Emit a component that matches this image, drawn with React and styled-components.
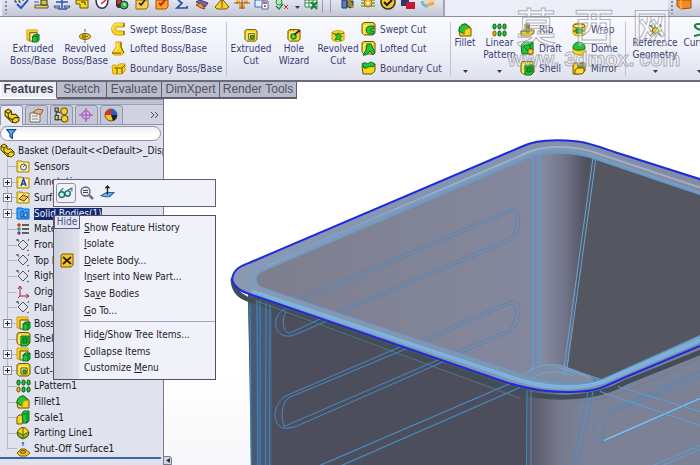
import React from "react";
import styled, { createGlobalStyle, css } from "styled-components";

const ui = `"DejaVu Sans Condensed", "DejaVu Sans", sans-serif`;

const GlobalStyle = createGlobalStyle`
  * { box-sizing: border-box; }
  body { margin: 0; background: #fff; font-family: ${ui}; font-size: 10px; overflow: hidden; }
  button { font: inherit; color: inherit; border: 0; padding: 0; background: none; }
  ul { list-style: none; margin: 0; padding: 0; }
`;

const Page = styled.div`
  height: 100vh;
  display: flex;
  flex-direction: column;
  overflow: hidden;
`;

/* ---------- top tool strip ---------- */

const TopStrip = styled.header`
  flex: none;
  height: 17px;
  display: flex;
  background: #eceef7;
  border-bottom: 1px solid #8c8e9c;
`;

const ToolGroup = styled.div`
  flex: none;
  display: flex;
  align-items: flex-start;
  width: ${(p) => p.$width}px;
  margin-left: ${(p) => (p.$push ? "auto" : "2px")};
  background: linear-gradient(#e3e5f0, #c3c6d5);
  border-right: ${(p) => (p.$push ? 0 : "2px")} solid #a3a5b5;
`;

const Grip = styled.span`
  flex: none;
  width: 4px;
  height: 14px;
  margin: 0 ${(p) => p.$gap}px 0 2px;
  background: radial-gradient(circle, #8789a0 1px, transparent 1px) 0 0 / 4px 4px;
`;

const ToolSeparator = styled.span`
  flex: none;
  width: 4px;
  height: 13px;
  margin-right: 4px;
  border-left: 1px solid #9a9cae;
`;

const ToolButton = styled.button`
  flex: none;
  width: 20px;
  height: 12px;
  display: flex;
  justify-content: center;
  ${(p) => p.$narrow && css`width: 10px; align-items: center; padding-top: 2px;`}
`;

/* ---------- ribbon ---------- */

const Ribbon = styled.nav`
  position: relative;
  flex: none;
  height: 65px;
  display: flex;
  background: linear-gradient(#fafbff, #f1f2f9 50%, #dfe1ec);
  border-bottom: 2px solid #696b7a;
  color: #373e70;
  overflow: hidden;
`;

const RibbonGroup = styled.div`
  flex: none;
  display: flex;
  margin: 5px 0 4px;
  padding: 0 2px 0 ${(p) => p.$pad || 0}px;
  border-right: 1px solid #c0c2d2;
`;

const LargeButton = styled.button`
  flex: none;
  width: ${(p) => p.$width}px;
  display: flex;
  flex-direction: column;
  align-items: center;
  padding-top: ${(p) => (p.$menu ? 1 : 7)}px;
  line-height: 12px;
  text-align: center;
  white-space: nowrap;

  span { margin-top: ${(p) => (p.$menu ? -1 : 0)}px; height: 24px; }
  svg:last-child { margin-top: ${(p) => (p.$menu ? 9 : 0)}px; }
  > svg:first-child { margin: 0; flex: none; }
`;

const SmallColumn = styled.div`
  flex: none;
  width: ${(p) => p.$width}px;
  display: flex;
  flex-direction: column;
  margin: -2px 0;
`;

const SmallButton = styled.button`
  height: 20px;
  display: flex;
  align-items: center;
  gap: 4px;
  white-space: nowrap;
`;

const Watermark = styled.div`
  position: absolute;
  z-index: 3;
  top: 0;
  right: 20px;
  width: 172px;
  display: flex;
  flex-direction: column;
  align-items: center;
  pointer-events: none;
  color: rgba(255, 255, 255, 0.35);
  -webkit-text-stroke: 1px rgba(135, 137, 150, 0.65);
`;

const WatermarkTitle = styled.div`
  display: flex;
  gap: 18px;
  font: 500 40px/50px "Noto Sans CJK SC", sans-serif;
`;

const WatermarkSite = styled.div`
  display: flex;
  gap: 5px;
  font: bold 20px/24px "Liberation Sans", sans-serif;
  margin-top: -3px;
`;

/* ---------- command tabs ---------- */

const Tabs = styled.div`
  flex: none;
  height: 17px;
  display: flex;
  padding-left: 1px;
`;

const Tab = styled.button`
  flex: none;
  width: ${(p) => p.$width}px;
  font: 12px/15px "Liberation Sans", sans-serif;
  color: #50525f;
  background: #b9bccb;
  border: solid #5c5e6c;
  border-width: 0 1px 2px 0;
  ${(p) => p.$active && css`
    font-weight: bold;
    color: #3f4150;
    background: #eceef5;
    border-bottom-color: #fbfbfd;
  `}
`;

/* ---------- workspace ---------- */

const Workspace = styled.main`
  position: relative;
  flex: 1;
  min-height: 0;
  display: flex;
`;

const Sidebar = styled.aside`
  flex: none;
  width: 164px;
  display: flex;
  flex-direction: column;
  background: #e0e3ed;
  border-right: 1px solid #777990;
  color: #15151c;
`;

const ManagerTabs = styled.div`
  flex: none;
  height: 26px;
  display: flex;
  align-items: flex-end;
  gap: 2px;
  padding-right: 4px;
  background: linear-gradient(#8f92a5 0 1px, #bfc3d3 1px 5px, #9c9fb2 5px 6px, #ced2e2 6px 25px, #8f92a8 25px);
`;

const ManagerTab = styled.button`
  width: 23px;
  height: 20px;
  display: grid;
  place-items: center;
  border: 1px solid #9497aa;
  border-bottom: 0;
  border-radius: 3px 3px 0 0;
  background: ${(p) => (p.$active ? "#e8ebf4" : "#c3c7d8")};
  ${(p) => !p.$active && css`border-bottom: 1px solid #9497aa;`}
`;

const MoreButton = styled.button`
  margin-left: auto;
  height: 20px;
  display: grid;
  place-items: center;
`;

const FilterBox = styled.label`
  flex: none;
  height: 15px;
  margin: 1px 2px 2px 0;
  display: flex;
  align-items: center;
  padding-left: 5px;
  border: 1px solid #8d90a4;
  border-radius: 8px;
  background: linear-gradient(#eceef5, #fff 60%);

  input { flex: 1; min-width: 0; height: 11px; border: 0; outline: 0; background: none; font: inherit; }
`;

const Tree = styled.ul`
  flex: 1;
  min-height: 0;
  display: grid;
  grid-auto-rows: 1fr;
  overflow: hidden;
`;

const TreeRow = styled.li`
  position: relative;
  min-height: 0;
  display: flex;
  align-items: center;
  gap: 3px;
  padding-left: ${(p) => (p.$root ? 0 : 16)}px;
  white-space: nowrap;

  svg { position: relative; flex: none; }
  ${(p) => !p.$root && css`
    &::before {
      content: "";
      position: absolute;
      left: 7px;
      top: 0;
      width: 9px;
      height: ${p.$last ? "50%" : "100%"};
      border-left: 1px solid #b5b7c5;
      background: linear-gradient(#b5b7c5, #b5b7c5) 0 ${p.$last ? "100%" : "50%"} / 9px 1px no-repeat;
    }
  `}
`;

const TreeLabel = styled.span`
  line-height: 12px;
  ${(p) => p.$selected && css`background: #14286e; color: #e8ecff;`}
`;

const Expander = styled.button`
  position: absolute;
  left: 3px;
  width: 9px;
  height: 9px;
  border: 1px solid #85889a;
  background:
    linear-gradient(#222, #222) 50% 50% / 5px 1px no-repeat,
    linear-gradient(#222, #222) 50% 50% / 1px 5px no-repeat,
    #f6f7fb;
`;

const RollbackBar = styled.div`
  flex: none;
  height: 8px;
  margin-right: 2px;
  border-top: 2px solid #3c62a8;
  background: #dfe2ec;
`;

const SplitterHandle = styled.button`
  position: absolute;
  left: 163px;
  bottom: 0;
  width: 9px;
  height: 9px;
  display: grid;
  place-items: center;
  background: #d4d7e4;
  border: 1px solid #777990;
  border-radius: 0 3px 0 0;
`;

const Viewport = styled.section`
  flex: 1;
  min-width: 0;
  overflow: hidden;

  svg { display: block; width: 100%; height: 100%; }
`;

/* ---------- floating context menu ---------- */

const ContextArea = styled.div`
  position: absolute;
  z-index: 2;
  left: 53px;
  top: 80px;
  width: 163px;
  color: #20212c;
`;

const ContextToolbar = styled.div`
  height: 28px;
  display: flex;
  align-items: center;
  gap: 1px;
  padding-left: 2px;
  background: #f1f2f9;
  border: 1px solid #5f6275;
`;

const ContextTool = styled.button`
  width: 20px;
  height: 20px;
  display: grid;
  place-items: center;
  border: 1px solid ${(p) => (p.$active ? "#9a8f93" : "transparent")};
  border-radius: 3px;
`;

const Menu = styled.div`
  position: relative;
  height: 165px;
  margin-top: 8px;
  padding: 3px 0;
  display: grid;
  grid-template-rows: repeat(6, 1fr) 8px repeat(3, 1fr);
  background: linear-gradient(to right, #cdd1de, #dfe2ec 25px, #f1f2f9 26px);
  border: 1px solid #4f5163;
`;

const MenuItem = styled.button`
  min-height: 0;
  display: grid;
  grid-template-columns: 27px 1fr;
  gap: 3px;
  align-items: center;
  justify-items: start;
  text-align: left;
  white-space: nowrap;

  svg { justify-self: center; }
`;

const MenuRule = styled.hr`
  width: 135px;
  margin: 3px 0 3px 26px;
  padding: 0;
  border: 0;
  border-top: 1px solid #9fa2b3;
`;

const Tooltip = styled.div`
  position: absolute;
  left: 0;
  top: -1px;
  width: 26px;
  height: 14px;
  background: #e3e6f2;
  border: 1px solid #5a5d78;
  color: #4d5278;
  line-height: 12px;
  text-align: center;
`;

/* ---------- icons ---------- */

const Y = "#f7d51d";
const YD = "#d99b10";
const O = "#6c5308";
const G = "#22c43a";
const GD = "#0b6e1e";

const cube = (
  <>
    <path d="M1 2l2-1.500h9l2 1.500v9l-2 2H3l-2-2z" fill={Y} stroke={O} />
    <path d="M3 3.500h9M3 3.500v9" stroke="#fff3a0" fill="none" />
  </>
);

const art = {
  extrude: (<><path d="M1 1h11v3H5v8H1z" fill={Y} stroke={YD} /><path d="M4 4h8v9H4z" fill="#f2e7a8" stroke={O} /><path d="M7 8l2-2h5v6l-2 2H7z" fill={G} stroke={GD} /><path d="M7 8h5v6M12 8l2-2" fill="none" stroke={GD} /></>),
  revolve: (<><ellipse cx="7.500" cy="8" rx="6" ry="3.200" fill={Y} stroke={O} /><path d="M4 8h7" stroke={O} /><path d="M7.500 0v15" stroke="#555" strokeDasharray="3 1" /><path d="M5 6v4l3-2z" fill={YD} stroke={O} strokeWidth=".7" /></>),
  sweep: (<><path d="M13 1H6C-1 1-1 13 6 13h7V9H7C4 9 4 5 7 5h6z" fill={Y} stroke={YD} /><path d="M12 2H6C2 2 1 5 2 8" fill="none" stroke="#fff19a" /><path d="M13 1v4M13 9v4" stroke={O} /></>),
  loft: (<><path d="M5 1h5v5l3 6-3 2H3l-2-2 4-6z" fill={Y} stroke={YD} /><path d="M6 2v5l-3 5" stroke="#fff19a" fill="none" /><path d="M10 1v5l3 6M1 12h9" stroke={O} fill="none" /></>),
  boundary: (<><path d="M1 5c3-3 4 1 6-1s4-1 7-1v7l-3 3H2z" fill={Y} stroke={YD} /><path d="M3 7h8v6M11 7l3-3M6 7v6" fill="none" stroke={O} /></>),
  cut: (<>{cube}<path d="M5 5h6v6H5z" fill="#f5f1a0" stroke={O} /><path d="M7 7h3v3H7z" fill={G} stroke={GD} /></>),
  hole: (<>{cube}<circle cx="7" cy="8" r="3" fill={G} stroke={GD} /><circle cx="7" cy="8" r="1" fill={Y} /><path d="M8 6l6-5" stroke="#222" strokeWidth="2" /><path d="M3 1l1 1M7 0v2M10 0v1M1 4h1" stroke="#d33" /></>),
  revcut: (<><path d="M1 4c0-3 13-3 13 0v7c0 3-13 3-13 0z" fill={Y} stroke={YD} /><path d="M1 4c2 2 11 2 13 0" fill="none" stroke={O} /><path d="M4 12l2-4-2-2h3l1-2 2 3 2 1-2 2 1 3-3-2z" fill={G} stroke={GD} strokeWidth=".7" /></>),
  sweepcut: (<>{cube}<path d="M13 4H9c-5 0-5 8 0 8h4V9h-3V7h3z" fill={G} stroke={GD} /></>),
  loftcut: (<>{cube}<path d="M6 3h4l4 9-2 2-3-4-4 4H2l3-5z" fill={G} stroke={GD} /></>),
  boundcut: (<><path d="M1 5c3-3 4 1 6-1s4-1 7-1v7l-3 3H2z" fill={Y} stroke={O} /><path d="M1 3c3-3 5 1 7-1s4 0 6 1l-2 3c-3-2-6 2-9 1z" fill={G} stroke={GD} /></>),
  fillet: (<><path d="M1 8c0-5 3-7 7-7l5 4v8H2z" fill={Y} stroke={O} /><path d="M1 8c0-5 3-7 7-7l4 4c-4 0-6 2-6 6z" fill={G} stroke={GD} /><path d="M6 13V9c0-3 3-4 7-4" fill="none" stroke={YD} /></>),
  pattern: (<>{[0, 5, 10].map((x) => [0, 7].map((y) => (<rect key={`${x}${y}`} x={x + 1} y={y + 1} width="3" height="5" rx="1.500" fill={x === 0 && y === 7 ? "#f5a21d" : G} stroke={x === 0 && y === 7 ? O : "#0a4d17"} />)))}</>),
  rib: (<><path d="M1 9h4V2h4v5l5 1v3l-4 3H1z" fill={Y} stroke={O} /><path d="M6 2h3v8H6zM3 8h9" fill={G} stroke="#a34b16" /></>),
  draft: (<><path d="M1 4l3-3h9v8l-2 4H2z" fill={G} stroke={GD} /><path d="M1 4h9l3-3M10 4l1 9M3 5l6 6" fill="none" stroke={GD} /><path d="M8 8h5v5H8z" fill={Y} stroke={O} /></>),
  shell: (<>{cube}<path d="M5 4h8v8l-2 2H5z" fill={G} stroke={GD} /><path d="M7 6h4v5H7z" fill="#0fa52b" stroke={GD} /></>),
  wrap: (<><path d="M1 4c0-4 12-4 12 0v7c0 4-12 4-12 0z" fill={Y} stroke={YD} /><ellipse cx="7" cy="4" rx="6" ry="2" fill="#fbec7b" stroke={O} /><path d="M4 7h6v4H4zM7 7v4M1 9h3M10 9h3" fill={G} stroke={GD} /></>),
  dome: (<><path d="M1 7h12v4c-2 4-10 4-12 0z" fill={Y} stroke={YD} /><path d="M1 7c0-8 12-8 12 0-2 3-10 3-12 0z" fill={G} stroke={GD} /></>),
  mirror: (<><path d="M1 2h5v5h3V2h4v8H7v3H1z" fill={Y} stroke={O} /><path d="M7 3l4-2v7l-4 2z" fill={G} stroke="#9a4318" /><path d="M3 9l3-2h6v4l-2 2H3z" fill="#ffdc34" stroke={O} /></>),
  refgeo: (<><path d="M1 2l12 11M13 1L2 13M7 0v14M1 8h13" stroke="#857b25" /><circle cx="7.500" cy="7.500" r="3" fill={Y} stroke={O} /><path d="M2 3l2-1v3M11 2h2v2M11 12l2-1" stroke="#3b7f32" fill="none" /></>),
  curves: (<path d="M13 2C1-1 1 4 6 6c6 2 7 5-4 7" fill="none" stroke="#16813a" strokeWidth="2" />),
  part: (<><path d="M1 3l3-2 3 2v3l4 0 3 3v3l-3 2-4-1-3-3-3-3z" fill={Y} stroke="#4c3a03" /><path d="M1 3l3 2 3-2M4 5v4l4 2 2-2 4 0M8 11v3" fill="none" stroke="#4c3a03" /></>),
  folder: (<><path d="M1 2h5l1 1h6v10H1z" fill="#f7dc4c" stroke="#a8861c" /><path d="M3 4h9v8H3z" fill="#fdf1a5" /></>),
  plane: (<path d="M7 2l5 5-5 5-5-5zM0 2h3M1 1l2 3M11 13l2-1M12 3l1-2" fill="none" stroke="#50525f" />),
};

art.sensor = <>{art.folder}<circle cx="7.500" cy="8" r="3" fill="#dff0ff" stroke="#356" /><path d="M7 8l2-2" stroke="#c22" /></>;
art.anno = <>{art.folder}<path d="M5 11l2.500-7L10 11M6 9h3" fill="none" stroke="#1c3fc2" strokeWidth="1.500" /></>;
art.surf = <>{art.folder}<path d="M3 9l4-4 5 2-4 4z" fill="#ffb82c" stroke="#5a3c05" /></>;
art.solid = <><path d="M1 2h5l1 1h6v10H1z" fill="#38a7f5" stroke="#0e5ec6" /><path d="M5 6l2-1v6H5zM8 8l3-2v5H8z" fill="#9be3ff" stroke="#063fa9" /></>;
art.mates = <><path d="M6 3h7M6 7h7M6 11h7" stroke="#333" strokeWidth="1.500" /><circle cx="3" cy="3" r="1.700" fill="#d32d2d" /><circle cx="3" cy="7" r="1.700" fill="#28a03a" /><circle cx="3" cy="11" r="1.700" fill="#6d34bb" /></>;
art.origin = <path d="M4 2v9h8M2 4l2-3 2 3M10 9l3 2-3 2M4 11l-2 2" fill="none" stroke="#a8233b" />;
art.scale = <><path d="M1 7l2-2h4v7l-1 2H1z" fill={Y} stroke={O} /><path d="M6 3l2-2h5v10l-2 2H7z" fill={G} stroke={GD} /><path d="M7 4h4v9M11 4l2-2" fill="none" stroke={GD} /></>;
art.parting = <><circle cx="7" cy="7" r="5.500" fill={Y} stroke={O} /><path d="M1 6l6 3 6-3-1 4-5 3-5-3zM7 1v12" fill={G} fillOpacity=".6" stroke={O} /></>;
art.shutoff = <><path d="M1 11l4-4h4l5 4-4 3H4z" fill={Y} stroke={O} /><ellipse cx="7" cy="10" rx="3" ry="1.500" fill="#f39d16" stroke={O} /><path d="M6 2l1-2 1 2M7 1v3" stroke="#2b60cd" fill="none" /></>;
art.property = <><path d="M1 5h10v9H1z" fill="#f3efe2" stroke="#7b6a54" /><path d="M3 8h6M3 11h6" stroke="#789" /><path d="M4 4l5-3 5 1-2 4H8z" fill="#e5b184" stroke="#8d5a31" /></>;
art.config = <><path d="M2 2v10h5M2 5h5" stroke="#333" fill="none" /><circle cx="9.500" cy="4" r="3" fill={Y} stroke={O} /><circle cx="10" cy="11" r="3" fill={Y} stroke={O} /><path d="M1 1h3v3H1zM1 8h3v4H1z" fill="#d7d272" stroke="#333" /></>;
art.target = <><circle cx="7" cy="7" r="4" fill="none" stroke="#b863c2" strokeWidth="1.500" /><path d="M7 0v14M0 7h14" stroke="#b863c2" strokeWidth="1.500" /></>;
art.display = <><circle cx="7" cy="7" r="6" fill="#f4c51c" stroke="#555" /><path d="M7 7V1a6 6 0 016 6z" fill="#2860c8" /><path d="M7 7H1a6 6 0 016-6z" fill="#dc2d20" /><path d="M7 7h6a6 6 0 01-4 6z" fill="#222" /></>;
art.funnel = <path d="M1 2h11L8 7v6l-3-2V7z" fill="#55b5ec" stroke="#174ba0" strokeWidth="1.500" />;
art.glasses = <><circle cx="3.500" cy="9" r="2.700" fill="#c6f0ee" stroke="#246a70" strokeWidth="1.300" /><circle cx="9" cy="8" r="2.500" fill="#c6f0ee" stroke="#246a70" strokeWidth="1.300" /><path d="M2 6l3-3M9 5l4-2v3" fill="none" stroke="#246a70" /></>;
art.magnify = <><circle cx="5.500" cy="5.500" r="4.500" fill="#e4edf5" stroke="#5d6474" strokeWidth="1.300" /><path d="M3 4.500h5M3 6.500h5" stroke="#444" /><path d="M9 9l4 4" stroke="#6a7486" strokeWidth="2.500" /></>;
art.normal = <><path d="M1 10l5-3h7l-4 4H5z" fill="#70b3ea" stroke="#2563a5" /><path d="M7 9V1M5 3l2-2 2 2" fill="none" stroke="#222" strokeWidth="1.300" /></>;
art.deleteBody = <><path d="M1 2l2-1h10v11l-2 2H1z" fill="#fac526" stroke="#825703" /><path d="M3 4l8 7M11 4l-8 7" stroke="#2a2108" strokeWidth="1.700" /></>;

function Icon({ name, size = 14 }) {
  return (
    <svg width={size} height={size} viewBox="0 0 15 15" aria-hidden="true">{art[name]}</svg>
  );
}

const Caret = () => (
  <svg width="5" height="3" viewBox="0 0 5 3" aria-hidden="true"><path d="M0 0h5L2.500 3z" fill="#33364f" /></svg>
);

/* Lower parts of the standard tool icons, clipped by the window top. */
const stripArt = {
  "Spell check": <><path d="M4 4l4 4 7-8" stroke="#2c58cf" strokeWidth="2" fill="none" /><path d="M2 0v2h2M6 0v2h2M10 0v1" stroke="#223" fill="none" /></>,
  Measure: <><path d="M2 5h13v3H2z" fill="#e6d44a" stroke="#555" /><path d="M8 0h6v5H8z" fill="#d9c233" stroke="#333" /><path d="M1 2h5" stroke="#2c58cf" /></>,
  "Mass properties": <><path d="M9 0v8M3 2h12M5 9h9" stroke="#2854b9" strokeWidth="1.500" /><path d="M1 6h6l-1 2H2zM11 6h6l-1 2h-4z" fill="#f3ca2d" stroke="#2854b9" /></>,
  "Section properties": <><path d="M3 0h12v8H7V4H3z" fill={Y} stroke={O} /><path d="M8 2h4v3" stroke="#333" fill="none" /></>,
  "Sensor": <><path d="M3 0c0 11 12 11 12 0" fill="#fff" stroke="#33334d" strokeWidth="1.500" /><path d="M8 4l5-4" stroke="#d22" strokeWidth="1.500" /></>,
  Statistics: <><path d="M3 0h6v8H5L3 6z" fill="#32353d" /><circle cx="6" cy="2" r="2" fill="#e03520" /><circle cx="11" cy="5" r="4" fill="#38b63f" stroke="#234" /><path d="M11 3v2h2" stroke="#fff" fill="none" /></>,
  "Check": <><path d="M3 0h12v7l-2 2H3z" fill="#fad04a" stroke="#8b6710" /><path d="M6 3l2 2 4-5" stroke="#223" strokeWidth="1.700" fill="none" /></>,
  "Import diagnostics": <><path d="M3 0h12v7l-2 2H3z" fill="#f5a823" stroke="#a94d10" /><path d="M6 3l2 2 4-5" stroke="#c81f12" strokeWidth="2" fill="none" /></>,
  Equations: <path d="M5 0l4 3-5 5h10V6" stroke="#234da7" strokeWidth="1.700" fill="none" />,
  "Deviation": <><path d="M3 2l4-2 8 3-3 4-3-2z" fill="#7a64b7" stroke="#373b72" /><path d="M3 5l5-2 4 6-4-1z" fill="#f19b38" stroke="#814c15" /></>,
  "Draft analysis": <><path d="M2 7L8 0h2l6 7-3 2H4z" fill="#f8cf23" stroke="#7a5a0e" /><path d="M9 0v8" stroke="#7a5a0e" /></>,
  "Undercut": <><path d="M3 2h4M11 2h4M6 6h6" stroke="#e4ab1c" strokeWidth="3" /><path d="M1 3h16M6 8h6" stroke="#8d5a12" /><path d="M9 0v9" stroke="#bd2d1a" /></>,
  "Help": <><path d="M2 0h9v7H2z" fill="#e2efff" stroke="#3f6caf" /><path d="M9 1h6v8H9z" fill="#fff" stroke="#3f6caf" /><path d="M10 3h4M12 5v2" stroke="#c22" strokeWidth="1.500" /></>,
  "Compare": <><circle cx="6" cy="2" r="3" fill="#aee8b3" stroke="#268a38" /><path d="M3 6l3 3 4-5" stroke="#268a38" strokeWidth="1.500" fill="none" /><path d="M11 5l4 4M15 5l-4 4" stroke="#d33" /></>,
  "Design table": <><path d="M2 0h12v7H2zM2 3h12M6 0v7M10 0v7" fill="#fff" stroke="#338547" /><path d="M8 2l6 7M14 2L8 9" stroke="#188536" strokeWidth="2" /></>,
  "Simulation": <><path d="M3 0h5v8H3z" fill="#5f7bd0" stroke="#234" /><path d="M8 1h6v5l-3 2-3-2z" fill="#3bac4b" stroke="#234" /><path d="M9 0l5 8" stroke="#db761c" strokeWidth="2" /></>,
  "Motion": <><path d="M2 0h14M2 3h14M2 6h14" stroke="#80b468" strokeWidth="2" /><circle cx="9" cy="3" r="4" fill="#f6bd2e" stroke="#a26a17" /><circle cx="9" cy="3" r="1.500" fill="#fff" /></>,
  "Verify": <><circle cx="9" cy="2" r="7" fill="#f5c728" stroke="#33301d" strokeWidth="1.500" /><path d="M5 2l3 3 5-5" stroke="#191919" strokeWidth="2" fill="none" /></>,
  "Body compare": <><path d="M2 0h8v6H2z" fill="#2d396d" /><path d="M7 2h9v7H7z" fill="#c51936" /></>,
  "Render": <><circle cx="10" cy="2" r="6.500" fill="#f1d7a5" /><path d="M3 1a5 5 0 006 5" stroke="#68bfdd" strokeWidth="3" fill="none" /><path d="M9 5l6-2" stroke="#eea35d" strokeWidth="3" /></>,
  "Assembly": <><path d="M2 0h14v8l-10 1-4-3z" fill="#f18b22" stroke="#a14d0c" /><path d="M6 0v9" stroke="#ffc46b" /></>,
};

function StripTool({ name }) {
  return (
    <ToolButton aria-label={name}>
      <svg width="18" height="11" viewBox="0 0 18 11" aria-hidden="true">{stripArt[name]}</svg>
    </ToolButton>
  );
}

const firstTools = ["Spell check", "Measure", "Mass properties", "Section properties", "Sensor", "Statistics", "Check", "Import diagnostics", "Equations", "Deviation", "Draft analysis", "Undercut", "Help", "Compare"];
const lastTools = ["Simulation", "Motion", "Verify", "Body compare", "Render"];

/* ---------- ribbon parts ---------- */

function Large({ icon, lines, width, menu }) {
  return (
    <LargeButton $width={width} $menu={menu}>
      <Icon name={icon} size={menu ? 15 : 14} />
      <span>{lines[0]}<br />{lines[1]}</span>
      {menu && <Caret />}
    </LargeButton>
  );
}

function Small({ items, width }) {
  return (
    <SmallColumn $width={width}>
      {items.map(([icon, label]) => (
        <SmallButton key={label}><Icon name={icon} size={15} />{label}</SmallButton>
      ))}
    </SmallColumn>
  );
}

const tabs = [["Features", 56], ["Sketch", 50], ["Evaluate", 55], ["DimXpert", 58], ["Render Tools", 77]];

const tree = [
  ["sensor", "Sensors"], ["anno", "Annotations", true], ["surf", "Surface Bodies", true],
  ["solid", "Solid Bodies(1)", true, true], ["mates", "Material"], ["plane", "Front Plane"],
  ["plane", "Top Plane"], ["plane", "Right Plane"], ["origin", "Origin"], ["plane", "Plane1"],
  ["extrude", "Boss-Extrude1", true], ["shell", "Shell1"], ["extrude", "Boss-Extrude2", true],
  ["cut", "Cut-Extrude1", true], ["pattern", "LPattern1"], ["fillet", "Fillet1"],
  ["scale", "Scale1"], ["parting", "Parting Line1"], ["shutoff", "Shut-Off Surface1"],
];

const menuTop = [["", "S", "how Feature History"], ["", "I", "solate"], ["", "D", "elete Body...", "deleteBody"], ["I", "n", "sert into New Part..."], ["Sa", "v", "e Bodies"], ["", "G", "o To..."]];
const menuBottom = [["Hid", "e", "/Show Tree Items..."], ["", "C", "ollapse Items"], ["Customize ", "M", "enu"]];

function Item({ parts: [before, key, after, icon] }) {
  return (
    <MenuItem role="menuitem">
      {icon ? <Icon name={icon} size={15} /> : <i />}
      <span>{before}<u>{key}</u>{after}</span>
    </MenuItem>
  );
}

/* ---------- basket model ---------- */

const outerRim = "M250 262L522 146C534 140 552 138 578 141C592 143 604 148 616 152L720 185V337L627 376C606 385 600 390 580 391C552 393 532 389 510 383L248 293C236 289 230 281 233 275C235 268 242 265 250 262Z";
const innerRim = "M262 271L523 160C541 151 569 151 590 157L720 201V326L604 378C590 384 556 385 532 377L262 287C255 284 254 275 262 271Z";

function Basket() {
  return (
    <svg viewBox="164 98 536 367" preserveAspectRatio="xMidYMid slice" role="img" aria-label="Basket model">
      <defs>
        <linearGradient id="sky" x1="0" y1="0" x2="0" y2="1"><stop offset=".45" stopColor="#fff" /><stop offset="1" stopColor="#e2e4ea" /></linearGradient>
        <linearGradient id="wall" x1="0" y1="0" x2="1" y2="0"><stop offset="0" stopColor="#7c7e8d" /><stop offset="1" stopColor="#85889d" /></linearGradient>
        <linearGradient id="backCorner" gradientUnits="userSpaceOnUse" x1="540" y1="0" x2="588" y2="0"><stop offset="0" stopColor="#8a8ca1" /><stop offset=".5" stopColor="#73758a" /><stop offset="1" stopColor="#4e505e" /></linearGradient>
        <linearGradient id="frontCorner" gradientUnits="userSpaceOnUse" x1="527" y1="0" x2="582" y2="0"><stop offset="0" stopColor="#535562" /><stop offset=".6" stopColor="#777a8d" /><stop offset="1" stopColor="#7d8196" /></linearGradient>
        <linearGradient id="rim" x1="0" y1="0" x2="1" y2="0"><stop offset="0" stopColor="#8b98b2" /><stop offset=".55" stopColor="#8294b0" /><stop offset="1" stopColor="#808ba1" /></linearGradient>
        <clipPath id="inside"><path d={innerRim} /></clipPath>
      </defs>
      <rect x="0" y="98" width="900" height="600" fill="url(#sky)" />

      <path d="M248 292L535 382V700H255Z" fill="#4d4e5b" />
      <path d="M527 380H600L720 330V700H527Z" fill="url(#frontCorner)" />
      <path d="M248 297L252 465V700H272V306Z" fill="#475a72" />
      <path d="M233 278C233 288 237 294 246 298L510 389C550 401 596 399 625 382L720 344" fill="none" stroke="#414d57" strokeWidth="5" />

      <g fill="none" stroke="#438bc7">
        <path d="M250 304L253 700M257 300L259 700M260 300V700M266 302L265 700M270 304L269 700" />
        <path d="M255 300L520 398M570 402C596 402 618 393 640 385L700 358" stroke="#5c7e9c" strokeWidth=".7" />
        <path d="M286 308C274 313 273 327 280 333Q285 337 293 335L326 321M286 311C281 319 283 331 289 333L321 318" />
        <path d="M401 346L289 394C272 400 270 427 286 428L296 426L446 360M407 348L289 397C281 402 281 418 284 426L439 359" />
        <path d="M515 381L315 467M520 387L337 467" strokeWidth="1.300" />
        <path d="M527 390L525 700M531 390V700M588 391L572 465L552 560M593 391L578 465L558 560" />
        <path d="M700 371L618 406C603 411 594 420 594 430C594 442 598 444 606 441L700 399M700 376L617 410C606 415 602 429 604 440L700 397" />
        <path d="M700 398L604 440" stroke="#8bb9dc" strokeWidth="1.500" />
        <path d="M600 391L700 425M618 386L700 411M660 466L700 449M651 466L700 445" stroke="#5aa0d3" />
      </g>

      <path d={outerRim} fill="url(#rim)" />
      <path d="M266 265L523 154C540 145 568 144 592 151L700 187" fill="none" stroke="#b0b5ca" strokeWidth="2" opacity=".75" />
      <path d="M256 285C246 278 250 271 262 266L520 158C542 146 570 147 592 155L700 192" fill="none" stroke="#719fca" strokeWidth="2" />
      <path d="M252 291L520 380C554 390 588 389 611 378L700 340" fill="none" stroke="#7eb0dc" strokeWidth="4" />

      <g clipPath="url(#inside)">
        <rect x="240" y="140" width="300" height="260" fill="url(#wall)" />
        <path d="M536 140H594L564 390H536Z" fill="url(#backCorner)" />
        <path d="M592 140H740V400H564Z" fill="#545660" />
        <path d="M530 366C548 358 570 366 590 376L605 390H525Z" fill="#7f8ca4" />
        <g fill="none" stroke="#5587b5">
          <path d="M533 140V371M540 140V365" stroke="#6098cd" strokeWidth="2" />
          <path d="M536 140V370" stroke="#778aaa" strokeWidth="2" />
          <path d="M594 150L563 375M597 150L566 375" stroke="#69a5d7" />
          <path d="M300 298L509 209C517 206 522 216 519 226C517 236 512 240 505 243L340 313M303 301L509 212C516 210 517 220 515 228C512 237 509 238 502 241L330 314" />
          <path d="M390 353L509 301C517 298 522 306 519 317C518 326 512 331 505 334L430 366M391 356L509 304C516 302 517 312 514 319C512 326 509 330 502 332L430 362" />
          <path d="M525 373C538 363 556 362 568 368L610 382M532 379C541 369 560 370 574 376M558 367L625 388" stroke="#73a7d3" />
        </g>
      </g>
      <path d={innerRim} fill="none" stroke="#609bd0" strokeWidth="1" />
      <path d="M252 290L515 377C550 388 590 388 609 377L700 337" fill="none" stroke="#79bce8" />
      <path d={outerRim} fill="none" stroke="#1c2bdd" strokeWidth="2" />
    </svg>
  );
}

export default function App() {
  return (
    <Page>
      <GlobalStyle />
      <TopStrip>
        <ToolGroup $width={443}>
          <Grip $gap={4} />
          {firstTools.map((name) => <StripTool key={name} name={name} />)}
          <ToolButton $narrow aria-label="More comparisons"><Caret /></ToolButton>
          <StripTool name="Design table" />
          <ToolSeparator /><ToolSeparator />
          {lastTools.map((name) => <StripTool key={name} name={name} />)}
        </ToolGroup>
        <ToolGroup $width={32} $push>
          <Grip $gap={0} />
          <StripTool name="Assembly" />
        </ToolGroup>
      </TopStrip>

      <Ribbon>
        <RibbonGroup $pad={7}>
          <Large icon="extrude" lines={["Extruded", "Boss/Base"]} width={52} />
          <Large icon="revolve" lines={["Revolved", "Boss/Base"]} width={52} />
          <Small width={113} items={[["sweep", "Swept Boss/Base"], ["loft", "Lofted Boss/Base"], ["boundary", "Boundary Boss/Base"]]} />
        </RibbonGroup>
        <RibbonGroup $pad={2}>
          <Large icon="cut" lines={["Extruded", "Cut"]} width={44} />
          <Large icon="hole" lines={["Hole", "Wizard"]} width={42} />
          <Large icon="revcut" lines={["Revolved", "Cut"]} width={46} />
          <Small width={87} items={[["sweepcut", "Swept Cut"], ["loftcut", "Lofted Cut"], ["boundcut", "Boundary Cut"]]} />
        </RibbonGroup>
        <RibbonGroup>
          <Large icon="fillet" lines={["Fillet", ""]} width={28} menu />
          <Large icon="pattern" lines={["Linear", "Pattern"]} width={41} menu />
          <Small width={52} items={[["rib", "Rib"], ["draft", "Draft"], ["shell", "Shell"]]} />
          <Small width={51} items={[["wrap", "Wrap"], ["dome", "Dome"], ["mirror", "Mirror"]]} />
        </RibbonGroup>
        <RibbonGroup $pad={2}>
          <Large icon="refgeo" lines={["Reference", "Geometry"]} width={54} menu />
          <Large icon="curves" lines={["Curves", ""]} width={34} menu />
        </RibbonGroup>
      </Ribbon>

      <Watermark aria-hidden="true">
        <WatermarkTitle><span>莫</span><span>西</span><span>网</span></WatermarkTitle>
        <WatermarkSite><span>www.</span><span>3dmox.</span><span>com</span></WatermarkSite>
      </Watermark>

      <Tabs role="tablist">
        {tabs.map(([label, width], i) => (
          <Tab key={label} role="tab" aria-selected={i === 0} $width={width} $active={i === 0}>{label}</Tab>
        ))}
      </Tabs>

      <Workspace>
        <Sidebar>
          <ManagerTabs>
            <ManagerTab $active aria-label="Feature tree"><Icon name="part" size={16} /></ManagerTab>
            <ManagerTab aria-label="Properties"><Icon name="property" size={15} /></ManagerTab>
            <ManagerTab aria-label="Configurations"><Icon name="config" size={16} /></ManagerTab>
            <ManagerTab aria-label="Dimensions"><Icon name="target" size={15} /></ManagerTab>
            <ManagerTab aria-label="Display"><Icon name="display" size={15} /></ManagerTab>
            <MoreButton aria-label="More tabs">
              <svg width="9" height="8" viewBox="0 0 9 8"><path d="M1 1l3 3-3 3M5 1l3 3-3 3" fill="none" stroke="#4a4d63" /></svg>
            </MoreButton>
          </ManagerTabs>
          <FilterBox>
            <Icon name="funnel" size={12} />
            <input aria-label="Filter" />
          </FilterBox>
          <Tree>
            <TreeRow $root>
              <Icon name="part" size={15} />
              <TreeLabel>Basket (Default&lt;&lt;Default&gt;_Displ</TreeLabel>
            </TreeRow>
            {tree.map(([icon, label, expandable, selected], i) => (
              <TreeRow key={i} $last={i === tree.length - 1}>
                {expandable && <Expander aria-label={`Expand ${label}`} />}
                <Icon name={icon} size={15} />
                <TreeLabel $selected={selected}>{label}</TreeLabel>
              </TreeRow>
            ))}
          </Tree>
          <RollbackBar />
        </Sidebar>
        <Viewport><Basket /></Viewport>
        <SplitterHandle aria-label="Collapse panel">
          <svg width="4" height="5" viewBox="0 0 4 5"><path d="M4 0v5L0 2.500z" fill="#333" /></svg>
        </SplitterHandle>

        <ContextArea>
          <ContextToolbar>
            <ContextTool $active aria-label="Hide"><Icon name="glasses" size={16} /></ContextTool>
            <ContextTool aria-label="Zoom to selection"><Icon name="magnify" size={15} /></ContextTool>
            <ContextTool aria-label="Normal to"><Icon name="normal" size={16} /></ContextTool>
          </ContextToolbar>
          <Menu role="menu">
            {menuTop.map((m) => <Item key={m[2]} parts={m} />)}
            <MenuRule />
            {menuBottom.map((m) => <Item key={m[2]} parts={m} />)}
            <Tooltip role="tooltip">Hide</Tooltip>
          </Menu>
        </ContextArea>
      </Workspace>
    </Page>
  );
}
